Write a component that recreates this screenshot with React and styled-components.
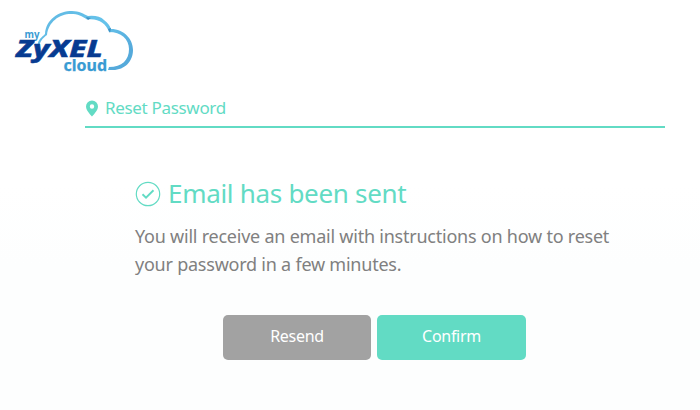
import React from "react";
import styled, { createGlobalStyle } from "styled-components";

const GlobalStyle = createGlobalStyle`
  * { box-sizing: border-box; }
  body { margin: 0; background: #fff; }
`;

const Page = styled.div`
  height: 410px;
  overflow: hidden;
  padding: 8px 35px 0 10px;
  font-family: "Noto Sans", sans-serif;
  background: linear-gradient(#fff 45%, #fdfefe 65%);
`;

const Logo = styled.svg`
  display: block;
  width: 130px;
  height: 70px;
`;

const Content = styled.main`
  margin-left: 75px;
`;

const TitleBar = styled.header`
  display: flex;
  align-items: center;
  height: 50px;
  padding-top: 12px;
  border-bottom: 2px solid #62dbc4;
  color: #62dbc4;
`;

const PinIcon = styled.svg`
  width: 14px;
  height: 17px;
  margin-right: 6px;
`;

const Title = styled.h1`
  margin: 0 0 1px;
  font-size: 17px;
  line-height: 24px;
  font-weight: 400;
  letter-spacing: -0.32px;
`;

const Message = styled.section`
  margin-left: 50px;
  padding-top: 46px;
`;

const Heading = styled.div`
  display: flex;
  align-items: center;
  height: 40px;
  color: #62dbc4;
`;

const CheckIcon = styled.svg`
  width: 26px;
  height: 26px;
  margin-right: 7px;
`;

const HeadingText = styled.h2`
  margin: 0 0 2px;
  font-size: 26px;
  line-height: 36px;
  font-weight: 400;
  letter-spacing: -0.3px;
`;

const Description = styled.p`
  width: 500px;
  margin: 8px 0 0;
  color: #808080;
  font-size: 18px;
  line-height: 28px;
  letter-spacing: -0.23px;
`;

const Actions = styled.div`
  display: flex;
  gap: 6px;
  margin: 37px 0 0 138px;
`;

const Button = styled.button`
  width: ${({ $primary }) => ($primary ? 149 : 148)}px;
  height: 45px;
  padding: 0 0 3px;
  border: 0;
  border-radius: 5px;
  background: ${({ $primary }) => ($primary ? "#62dbc4" : "#a2a2a2")};
  color: #fff;
  font: 400 16px "Noto Sans", sans-serif;
  letter-spacing: -0.3px;
`;

export default function App() {
  return (
    <>
      <GlobalStyle />
      <Page>
        <Logo viewBox="10 8 130 70" aria-label="my ZyXEL cloud">
          <defs>
            <linearGradient id="cloudShade" x1="0" y1="0" x2="1" y2="0.6">
              <stop offset="0" stopColor="#62b8e2" />
              <stop offset="0.6" stopColor="#65c3eb" />
              <stop offset="1" stopColor="#55aadb" />
            </linearGradient>
          </defs>
          <g fill="url(#cloudShade)">
            <path d="M37.500 45 C38.500 39 41 38 45 34 C46 19 59 11 72 11 C79 11 84 14 88 16 Q99 15 104 20 C108 23 110 26 111 29 C124 29 133 39 133 50 C133 61 125 70 113 70 L108 70 L109 67 C122 67 129 60 129 49 C129 39 121 32 109 32 C106 23 98 18 87 19.500 C82 16 78 14 71 14 C59 14 48.500 22 47 35 C43 38 41 40 39.500 45Z" />
          </g>
          <path d="M86 17l5 1-3 2zM108 29l3-1-1 5z" fill="#3f91c4" />
          <text x="24.500" y="38.300" fill="#399bd3" fontFamily="Noto Sans, sans-serif" fontSize="10.500" fontWeight="700" textLength="15" lengthAdjust="spacingAndGlyphs">my</text>
          <text x="16.300" y="57" fill="#073b91" stroke="#073b91" strokeWidth=".5" fontFamily="Noto Sans, sans-serif" fontSize="23" fontWeight="800" fontStyle="italic" textLength="86.500" lengthAdjust="spacingAndGlyphs">ZyXEL</text>
          <text x="63.500" y="70.500" fill="#399bd3" stroke="#399bd3" strokeWidth=".25" fontFamily="Noto Sans, sans-serif" fontSize="16" fontWeight="700" textLength="43.500" lengthAdjust="spacingAndGlyphs">cloud</text>
        </Logo>
        <Content>
          <TitleBar>
            <PinIcon viewBox="0 0 14 17" fill="currentColor" aria-hidden="true">
              <path fillRule="evenodd" d="M7 .5a6 6 0 0 0-6 6C1 10.8 7 16.5 7 16.5s6-5.700 6-10a6 6 0 0 0-6-6Zm0 3.800a2.200 2.200 0 1 1 0 4.400 2.200 2.200 0 0 1 0-4.400Z" />
            </PinIcon>
            <Title>Reset Password</Title>
          </TitleBar>
          <Message>
            <Heading>
              <CheckIcon viewBox="0 0 26 26" fill="none" stroke="currentColor" aria-hidden="true">
                <circle cx="13" cy="13" r="11.700" strokeWidth="1.200" />
                <path d="m7.500 13.300 3.500 3.300 7.500-7.300" strokeWidth="1.900" />
              </CheckIcon>
              <HeadingText>Email has been sent</HeadingText>
            </Heading>
            <Description>
              You will receive an email with instructions on how to reset your password in a few minutes.
            </Description>
          </Message>
          <Actions>
            <Button type="button">Resend</Button>
            <Button type="button" $primary>Confirm</Button>
          </Actions>
        </Content>
      </Page>
    </>
  );
}
